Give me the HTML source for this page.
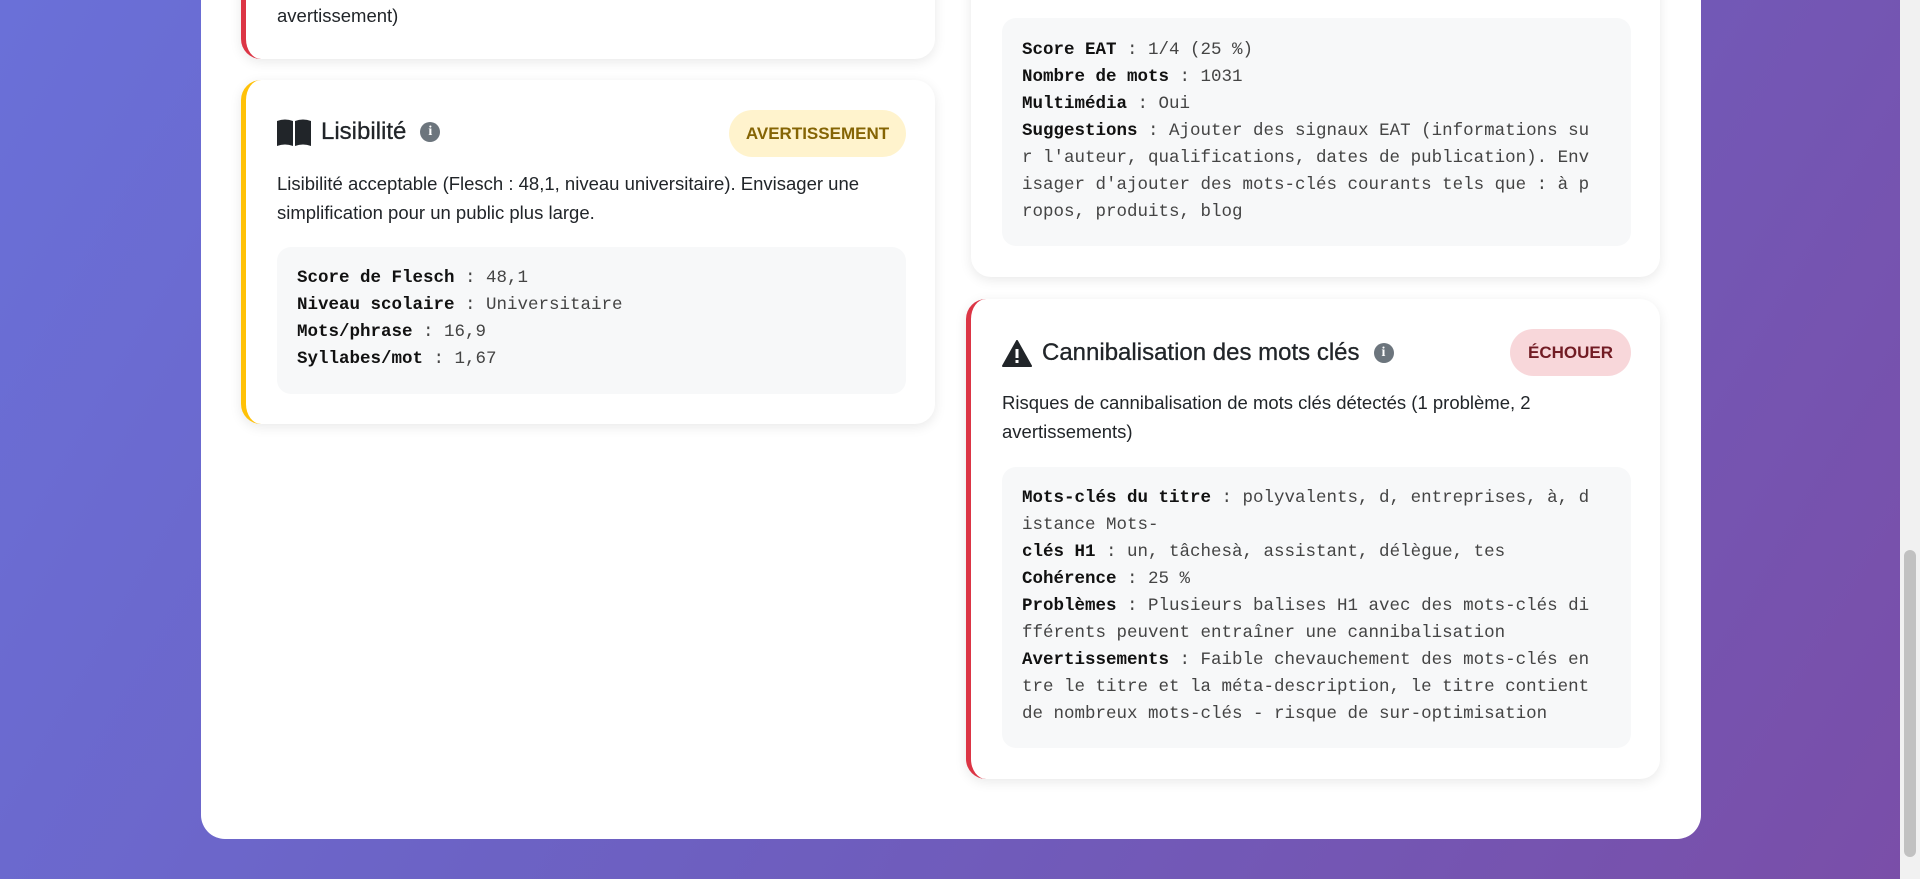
<!DOCTYPE html>
<html><head><meta charset="utf-8"><style>
*{box-sizing:border-box;margin:0;padding:0}
html,body{width:1920px;height:879px;overflow:hidden}
body{background:linear-gradient(120deg,#6a70d8 0%,#6d5fc0 50%,#7a4ea8 100%);font-family:"Liberation Sans",sans-serif;color:#212529;position:relative}
.wrap{position:absolute;left:201px;top:-40px;width:1500px;height:879px;background:#fff;border-radius:24px}
.card{position:absolute;background:#fff;border-radius:20px;box-shadow:0 3px 12px rgba(0,0,0,.09)}
.red{border-left:5px solid #dc3545}
.yel{border-left:5px solid #ffc107}
.title{position:absolute;font-size:24px;display:flex;align-items:center;gap:10px;white-space:nowrap;-webkit-text-stroke:0.3px #212529}
.info{display:inline-block;width:20px;height:20px;border-radius:50%;background:#6c757d;color:#fff;font-size:14px;font-weight:bold;text-align:center;line-height:20px;font-family:"Liberation Serif",serif;margin-left:4px;-webkit-text-stroke:0}
.badge{position:absolute;border-radius:24px;font-size:17px;font-weight:bold;display:flex;align-items:center;justify-content:center;text-transform:uppercase}
.desc{position:absolute;font-size:18.5px;line-height:29px;white-space:nowrap;color:#212529}
.code{position:absolute;background:#f7f8f9;border-radius:14px;font-family:"Liberation Mono",monospace;font-size:17.5px;line-height:27px;white-space:pre;color:#444;padding-left:20px}
.code b{color:#111}
.sb{position:absolute;right:0;top:0;width:20px;height:879px;background:#f1f1f1}
.th{position:absolute;right:4px;top:550px;width:12px;height:307px;background:#c1c1c1;border-radius:6px}
</style></head><body>
<div class="wrap"></div>

<div class="card red" style="left:241px;top:-30px;width:694px;height:89px">
<div class="desc" style="left:31px;top:31px">avertissement)</div></div>

<div class="card yel" style="left:241px;top:80px;width:694px;height:344px">
<div class="title" style="left:31px;top:38px">
<svg width="34" height="28" viewBox="0 0 34 28"><path d="M0 3 Q8 0 16 3 V28 Q8 25 0 28Z M18 3 Q26 0 34 3 V28 Q26 25 18 28Z" fill="#212529"/></svg>
<span>Lisibilité</span><span class="info">i</span></div>
<div class="badge" style="left:483px;top:30px;width:177px;height:47px;background:#fff3cd;color:#856404">Avertissement</div>
<div class="desc" style="left:31px;top:89px">Lisibilité acceptable (Flesch : 48,1, niveau universitaire). Envisager une<br>simplification pour un public plus large.</div>
<div class="code" style="left:31px;top:167px;width:629px;height:147px;padding-top:18px"><b>Score de Flesch</b> : 48,1
<b>Niveau scolaire</b> : Universitaire
<b>Mots/phrase</b> : 16,9
<b>Syllabes/mot</b> : 1,67</div>
</div>

<div class="card" style="left:971px;top:-30px;width:689px;height:307px">
<div class="code" style="left:31px;top:48px;width:629px;height:228px;padding-top:19px"><b>Score EAT</b> : 1/4 (25 %)
<b>Nombre de mots</b> : 1031
<b>Multimédia</b> : Oui
<b>Suggestions</b> : Ajouter des signaux EAT (informations su
r l'auteur, qualifications, dates de publication). Env
isager d'ajouter des mots-clés courants tels que : à p
ropos, produits, blog</div>
</div>

<div class="card red" style="left:966px;top:299px;width:694px;height:480px">
<div class="title" style="left:31px;top:40px">
<svg width="30" height="27" viewBox="0 0 30 27"><path d="M15 1 L29 26 H1Z" fill="#212529" stroke="#212529" stroke-width="2" stroke-linejoin="round"/><rect x="13.5" y="9" width="3" height="9" fill="#fff"/><rect x="13.5" y="20" width="3" height="3" fill="#fff"/></svg>
<span>Cannibalisation des mots clés</span><span class="info">i</span></div>
<div class="badge" style="left:539px;top:30px;width:121px;height:47px;background:#f8d7da;color:#721c24">Échouer</div>
<div class="desc" style="left:31px;top:89px">Risques de cannibalisation de mots clés détectés (1 problème, 2<br>avertissements)</div>
<div class="code" style="left:31px;top:168px;width:629px;height:281px;padding-top:18px"><b>Mots-clés du titre</b> : polyvalents, d, entreprises, à, d
istance Mots-
<b>clés H1</b> : un, tâchesà, assistant, délègue, tes
<b>Cohérence</b> : 25 %
<b>Problèmes</b> : Plusieurs balises H1 avec des mots-clés di
fférents peuvent entraîner une cannibalisation
<b>Avertissements</b> : Faible chevauchement des mots-clés en
tre le titre et la méta-description, le titre contient
de nombreux mots-clés - risque de sur-optimisation</div>
</div>

<div class="sb"><div class="th"></div></div>
</body></html>
